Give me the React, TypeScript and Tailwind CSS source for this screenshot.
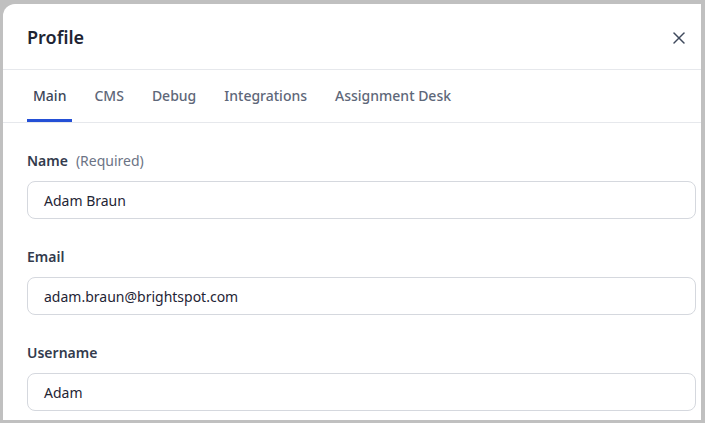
import { X } from "lucide-react";

const tabs = ["Main", "CMS", "Debug", "Integrations", "Assignment Desk"];

const fields = [
  { label: "Name", hint: "(Required)", value: "Adam Braun" },
  { label: "Email", value: "adam.braun@brightspot.com" },
  { label: "Username", value: "Adam" },
];

export default function App() {
  return (
    <div
      className="w-[705px] h-[423px] overflow-hidden bg-[#c0c0c0] pl-[3px] pt-[4px] pr-[4px] pb-[3px]"
      style={{ fontFamily: '"Noto Sans", "Open Sans", sans-serif' }}
    >
      <div className="h-full bg-white rounded-tl-[12px] flex flex-col">
        {/* Header */}
        <div className="h-[66px] shrink-0 flex items-center justify-between pl-[24px] pr-[12px] pt-[2px] border-b border-[#e6e8ec]">
          <h2 className="text-[18px] font-semibold text-[#1e2433]">Profile</h2>
          <button type="button" className="text-[#3f495c]">
            <X size={20} strokeWidth={1.8} />
          </button>
        </div>

        {/* Tabs */}
        <div className="h-[53px] shrink-0 flex items-end gap-[16px] pl-[24px] border-b border-[#e6e8ec]">
          {tabs.map((t, i) => (
            <div
              key={t}
              className={
                i === 0
                  ? "px-[6px] h-full flex items-center text-[14px] font-medium text-[#3c4558] border-b-[3px] border-[#2450d6] pt-[1px]"
                  : "px-[6px] h-full flex items-center text-[14px] font-medium text-[#5e6779] border-b-[3px] border-transparent pt-[1px]"
              }
            >
              {t}
            </div>
          ))}
        </div>

        {/* Form */}
        <div className="flex flex-col gap-[27px] pl-[24px] pr-[5px] pt-[27px]">
          {fields.map((f) => (
            <div key={f.label} className="flex flex-col gap-[11px]">
              <div className="flex items-center gap-[8px] h-[20px] text-[14px]">
                <span className="font-semibold text-[#333b4d]">{f.label}</span>
                {f.hint && <span className="text-[#6b7385]">{f.hint}</span>}
              </div>
              <div className="h-[38px] rounded-[8px] border border-[#d5d8de] flex items-center px-[16px] text-[14px] text-[#1f2535]">
                {f.value}
              </div>
            </div>
          ))}
        </div>
      </div>
    </div>
  );
}
